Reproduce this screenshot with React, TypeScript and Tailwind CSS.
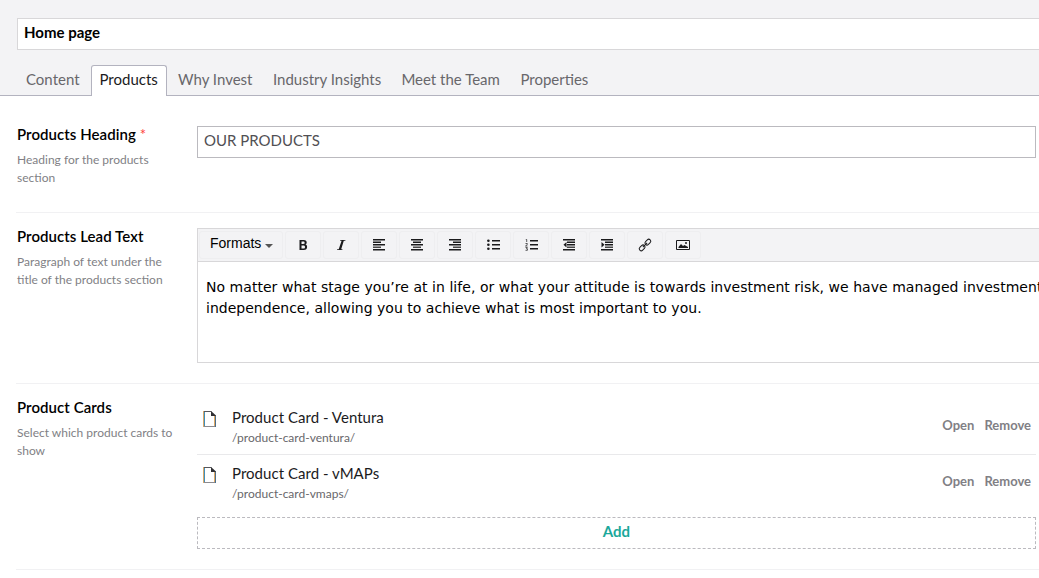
import type { ReactNode } from "react";

const tabs = [
  { name: "Content", box: "w-[74px] pl-[8px]" },
  { name: "Products", box: "w-[76px] pl-[7.5px]" },
  { name: "Why Invest", box: "w-[95px] pl-[10px]" },
  { name: "Industry Insights", box: "w-[128px] pl-[10px]" },
  { name: "Meet the Team", box: "w-[119px] pl-[10.4px]" },
  { name: "Properties", box: "w-[90px] pl-[10.4px]" },
];

function Lines({ rows }: { rows: [number, number][] }) {
  return (
    <>
      {rows.map(([x, w], i) => (
        <rect key={i} x={x} y={i * 2.5} width={w} height={1.5} opacity={i === 3 ? 0.8 : 1} />
      ))}
    </>
  );
}

function BulletRows() {
  return (
    <>
      <rect x="5" y="1" width="8" height="1.5" />
      <rect x="5" y="5" width="8" height="1.5" />
      <rect x="5" y="9" width="8" height="1.5" />
    </>
  );
}

const tools: { name: string; icon: ReactNode }[] = [
  { name: "Bold", icon: <path fillRule="evenodd" d="M2.500 1h4.200c2.200 0 3 1 3 2.500 0 1-.5 1.700-1.300 2.100 1.100.3 1.700 1.100 1.700 2.400 0 1.900-1.200 3-3.400 3H2.500V1Zm2 1.600v2.300h1.800c1 0 1.300-.4 1.300-1.200 0-.8-.4-1.100-1.300-1.100H4.500Zm0 3.800v3h1.900c1.100 0 1.600-.5 1.600-1.500s-.5-1.500-1.600-1.500H4.500Z" /> },
  { name: "Italic", icon: <path d="M5.300 1H10.500l-.2.8H8.800L6.200 10.200h1.300l-.2.8H2l.2-.8h1.500L6.600 1.800H5.100Z" /> },
  { name: "Align left", icon: <Lines rows={[[0, 12], [0, 8], [0, 12], [0, 8], [0, 12]]} /> },
  { name: "Align center", icon: <Lines rows={[[0, 12], [2, 8], [0, 12], [2, 8], [0, 12]]} /> },
  { name: "Align right", icon: <Lines rows={[[0, 12], [4, 8], [0, 12], [4, 8], [0, 12]]} /> },
  { name: "Bullet list", icon: <><circle cx="1.400" cy="1.700" r="1.300" /><circle cx="1.400" cy="5.700" r="1.300" /><circle cx="1.400" cy="9.700" r="1.300" /><BulletRows /></> },
  { name: "Numbered list", icon: <><path fill="none" stroke="currentColor" strokeWidth=".7" d="M.8.5h.9V3M.5 4.500h1.800v1l-1.800 1.500h2M.5 8.500h1.800L1.500 9.700h.9v1.600H.5" /><BulletRows /></> },
  { name: "Outdent", icon: <><Lines rows={[[0, 12], [4, 8], [4, 8], [4, 8], [0, 12]]} /><path d="M3.500 3v5.500L.5 5.750Z" /></> },
  { name: "Indent", icon: <><Lines rows={[[0, 12], [4, 8], [4, 8], [4, 8], [0, 12]]} /><path d="M.5 3v5.500l3-2.750Z" /></> },
  { name: "Link", icon: <g transform="rotate(-45 6 6)" fill="none" stroke="currentColor" strokeWidth="1"><rect x="-1.300" y="4" width="6.500" height="4" rx="2" /><rect x="6.800" y="4" width="6.500" height="4" rx="2" /><path d="M3 6h6" /></g> },
  { name: "Image", icon: <><path fill="none" stroke="currentColor" d="M-.5 1.500h13v9H-.5Z" /><path d="M1.500 9V8L4 5l2 2 1.500-1 3.500 2v1Z" /><circle cx="9" cy="4" r="1" /></> },
];

function Property({ title, help, required, className, children }: { title: string; help: string; required?: boolean; className: string; children: ReactNode }) {
  return (
    <section className={`ml-4 flex border-b border-[#f1f1f3] pl-px ${className}`}>
      <div className="w-[180px] shrink-0">
        <h2 className="mt-[-2px] text-[15px] leading-5 font-semibold tracking-[0.06px] text-black">
          {title}
          {required && <span className="font-normal text-[#fe3e39]"> *</span>}
        </h2>
        <p className="mt-[7px] w-[165px] text-[12px] leading-[18px] text-[#817f85]">{help}</p>
      </div>
      <div className="min-w-0 flex-1">{children}</div>
    </section>
  );
}

function Card({ name, path, divider }: { name: string; path: string; divider?: boolean }) {
  return (
    <div className={`mr-[3px] flex h-14 ${divider ? "border-b border-[#e9e9eb]" : ""}`}>
      <svg className="mt-[12px] ml-[6px] shrink-0" width="13" height="17" viewBox="0 0 13 17">
        <path d="M1.500.5H8l4 4V15.500H1.500Z" fill="white" />
        <path d="M1 .5h7.500" stroke="#55565c" />
        <path d="M1 15.500h11.500" stroke="#8b8b90" />
        <path d="M8 0l5 4.500v.5H8Z" fill="#303033" />
        <path d="M.5 0v16" stroke="#d8a76b" />
        <path d="M1.500 1v14" stroke="#3f8fbd" />
        <path d="M12.500 5v11" stroke="#4d6f8c" />
        <path d="M11.500 5v10" stroke="#e0a964" />
      </svg>
      <div className="ml-4 flex-1">
        <div className="mt-[8px] text-[15px] leading-5 tracking-[0.03px] text-[#1b1b1d]">{name}</div>
        <div className="mt-[3px] text-[12px] leading-4 text-[#68676b]">{path}</div>
      </div>
      <div className="mt-[16px] mr-[5px] flex gap-[10px] text-[13px] leading-5 font-bold text-[#817f85]">
        <span>Open</span>
        <span>Remove</span>
      </div>
    </div>
  );
}

export default function App() {
  return (
    <main className="h-[578px] w-full overflow-hidden bg-white font-['Lato',sans-serif]">
      <header className="flex h-24 flex-col border-b border-[#b3b3bf] bg-[#f3f3f5] pt-[18px]">
        <div className="ml-[17px] h-8 shrink-0 border border-r-0 border-[#d8d7d9] bg-white pt-[3px] pl-[6px] text-[15px] leading-5 font-bold">Home page</div>
        <nav className="mt-[15px] -mb-px ml-[17px] flex shrink-0 text-[15px] leading-5">
          {tabs.map((t) => (
            <div
              key={t.name}
              className={`h-[31px] shrink-0 border-x border-t pt-[3px] whitespace-nowrap ${t.box} ${t.name === "Products" ? "rounded-t-[3px] border-[#b3b3bf] bg-white text-[#1b1b1d]" : "border-transparent text-[#68676b]"}`}
            >
              {t.name}
            </div>
          ))}
        </nav>
      </header>
      <Property title="Products Heading" help="Heading for the products section" required className="h-[117px] pt-[30px]">
        <div className="mr-[3px] h-8 border border-[#bbbabf] pt-[3px] pl-[6px] text-[15px] leading-5 text-[#515054]">OUR PRODUCTS</div>
      </Property>
      <Property title="Products Lead Text" help="Paragraph of text under the title of the products section" className="h-[171px] pt-[15px]">
        <div className="h-[135px] border border-r-0 border-[#d8d7d9]">
          <div className="flex h-[33px] items-center border-b border-[#d8d7d9] bg-[#f3f3f5] pl-px text-[#1b1b1d]">
            <div className="mr-[2px] flex h-[28px] w-[84px] rounded-[3px] border border-[#eeeef0] pl-[10px] font-['Liberation_Sans',sans-serif] text-[14px] leading-[22px] text-black">
              Formats
              <svg className="mt-[12px] ml-[4px]" width="8" height="4"><path d="M0 0h8L4 4Z" fill="#555" /></svg>
            </div>
            {tools.map((t) => (
              <div key={t.name} className="mr-[2px] flex h-[28px] w-9 items-center justify-center rounded-[3px] border border-[#eeeef0]">
                <svg width="12" height="12" viewBox="0 0 12 12" fill="currentColor" className="overflow-visible">{t.icon}</svg>
              </div>
            ))}
          </div>
          <p className="mt-[15px] ml-[8px] font-['DejaVu_Sans',sans-serif] text-[14px] leading-[21px] tracking-[0.015px] whitespace-nowrap text-black">
            <span className="tracking-[0.04px]">No matter what stage you’re at in life, or what your attitude is towards investment risk, we have managed investment</span>
            <br />
            independence, allowing you to achieve what is most important to you.
          </p>
        </div>
      </Property>
      <Property title="Product Cards" help="Select which product cards to show" className="h-[186px] pt-[15px]">
        <Card name="Product Card - Ventura" path="/product-card-ventura/" divider />
        <Card name="Product Card - vMAPs" path="/product-card-vmaps/" />
        <div className="mt-[6px] mr-[3px] h-8 border border-dashed border-[#bbbabf] pt-[3px] text-center text-[15px] leading-5 font-bold text-[#1ba89b]">Add</div>
      </Property>
    </main>
  );
}
